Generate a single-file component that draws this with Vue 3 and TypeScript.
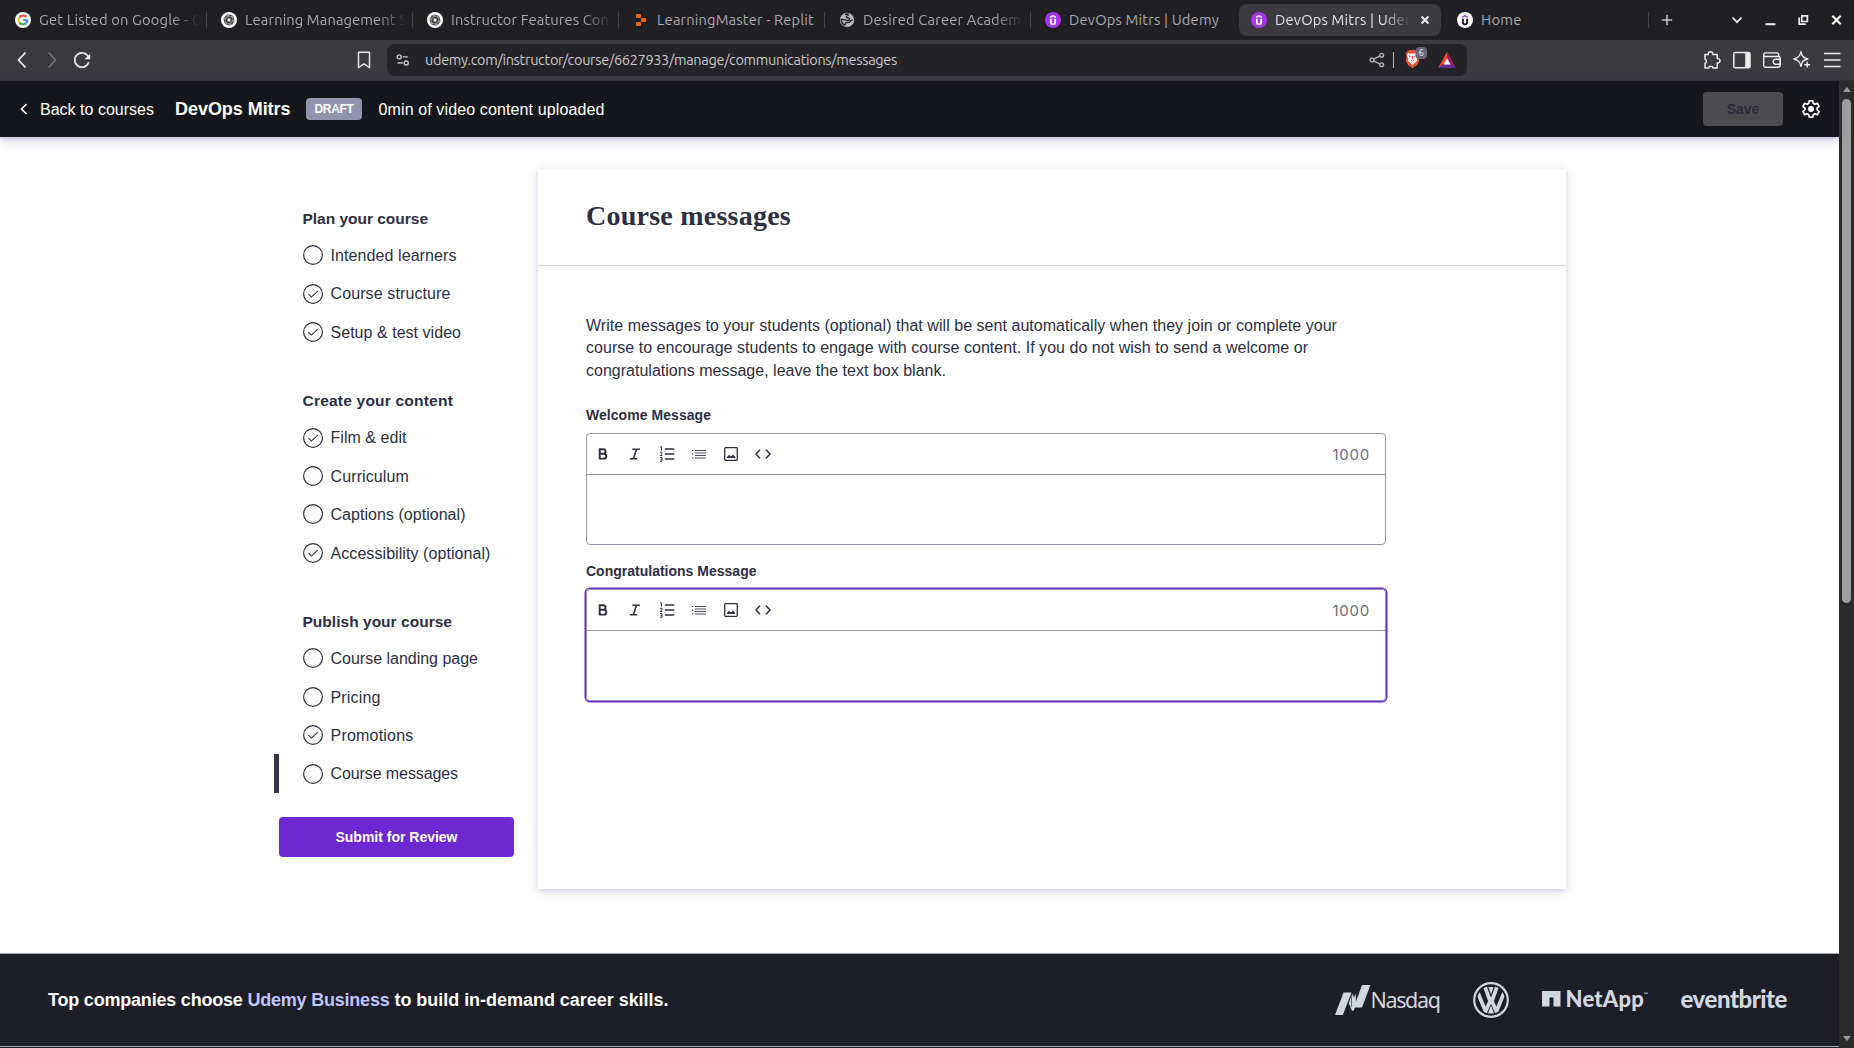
<script setup lang="ts">
import type { Directive } from 'vue'

interface Tab { title: string; icon: 'google' | 'gpt' | 'replit' | 'globe' | 'udemy' | 'home'; active?: boolean; divider?: boolean; fade?: boolean; width: number }
interface Step { label: string; done?: boolean; current?: boolean; width: number }
interface Section { title: string; width: number; steps: Step[] }

/* Tracks a line of text so that it spans the given width in pixels. */
const vFit: Directive<HTMLElement, number> = {
  mounted(el, { value }) {
    const natural = el.getBoundingClientRect().width
    const count = (el.textContent ?? '').length
    if (count) el.style.letterSpacing = `${((value - natural) / count).toFixed(3)}px`
  },
}

const tabs: Tab[] = [
  { title: 'Get Listed on Google - G', icon: 'google', divider: true, fade: true, width: 163 },
  { title: 'Learning Management S', icon: 'gpt', divider: true, fade: true, width: 162 },
  { title: 'Instructor Features Con', icon: 'gpt', divider: true, fade: true, width: 158 },
  { title: 'LearningMaster - Replit', icon: 'replit', divider: true, width: 157 },
  { title: 'Desired Career Academ', icon: 'globe', divider: true, fade: true, width: 158 },
  { title: 'DevOps Mitrs | Udemy', icon: 'udemy', width: 150 },
  { title: 'DevOps Mitrs | Udemy', icon: 'udemy', active: true, width: 150 },
  { title: 'Home', icon: 'home', divider: true, width: 40.5 },
]

const sections: Section[] = [
  {
    title: 'Plan your course', width: 125.5,
    steps: [
      { label: 'Intended learners', width: 126 },
      { label: 'Course structure', done: true, width: 120 },
      { label: 'Setup & test video', done: true, width: 130.5 },
    ],
  },
  {
    title: 'Create your content', width: 150.5,
    steps: [
      { label: 'Film & edit', done: true, width: 76 },
      { label: 'Curriculum', width: 78.5 },
      { label: 'Captions (optional)', width: 135 },
      { label: 'Accessibility (optional)', done: true, width: 160 },
    ],
  },
  {
    title: 'Publish your course', width: 149.5,
    steps: [
      { label: 'Course landing page', width: 147.5 },
      { label: 'Pricing', width: 50 },
      { label: 'Promotions', done: true, width: 83 },
      { label: 'Course messages', current: true, width: 127.5 },
    ],
  },
]

const intro = [
  { text: 'Write messages to your students (optional) that will be sent automatically when they join or complete your', width: 751 },
  { text: 'course to encourage students to engage with course content. If you do not wish to send a welcome or', width: 722 },
  { text: 'congratulations message, leave the text box blank.', width: 360 },
]

const editors = [
  { label: 'Welcome Message', width: 125, focused: false },
  { label: 'Congratulations Message', width: 170.5, focused: true },
]
</script>

<template>
  <div class="screen">
    <div class="tabstrip">
      <div v-for="(tab, i) in tabs" :key="i" class="tab" :class="{ divided: tab.divider, active: tab.active, fade: tab.fade }">
        <svg v-if="tab.icon === 'google'" class="fav" viewBox="0 0 16 16">
          <circle cx="8" cy="8" r="8" fill="#fff" />
          <g fill="none" stroke-width="2">
            <path d="M11.4 5A4.4 4.4 0 0 0 4.3 5.7" stroke="#ea4335" />
            <path d="M4.3 5.7A4.4 4.4 0 0 0 4.3 10.3" stroke="#fbbc05" />
            <path d="M4.3 10.3A4.4 4.4 0 0 0 10.9 11.3" stroke="#34a853" />
            <path d="M10.9 11.3A4.4 4.4 0 0 0 12.4 8.2H8.1" stroke="#4285f4" />
          </g>
        </svg>
        <svg v-else-if="tab.icon === 'gpt'" class="fav" viewBox="0 0 16 16">
          <circle cx="8" cy="8" r="8" fill="#fff" />
          <g fill="none" stroke="#222" stroke-width=".8">
            <rect v-for="r in 3" :key="r" x="2.900" y="5.400" width="10.200" height="5.200" rx="2.500" :transform="`rotate(${r * 60 + 15} 8 8)`" />
            <path d="M8 5.8l1.900 1.100v2.200L8 10.200 6.100 9.100V6.900z" />
          </g>
        </svg>
        <svg v-else-if="tab.icon === 'replit'" class="fav" viewBox="0 0 16 16" fill="#f26207">
          <rect x="3" y="2" width="5" height="4" rx=".8" /><rect x="8" y="6" width="5" height="4" rx=".8" /><rect x="3" y="10" width="5" height="4" rx=".8" />
        </svg>
        <svg v-else-if="tab.icon === 'globe'" class="fav" viewBox="0 0 16 16">
          <circle cx="8" cy="8" r="7.200" fill="#b4b7bb" />
          <path d="M6 2.500L8.500 2c1.300.1.700 1.600-.3 2C7 4.500 7 5.600 8.200 5.700c1.600.2 2.500.3 2.300 1.600-.2 1.200-1.600 1.200-2.800 1C6 8 4.300 7 2.300 7.500c-.1 2.300.9 4.300 2.700 5.400 1 .5 1.500-.3 1.300-1.200-.2-1 .5-1.200 1.400-1.200 1.500 0 3.300.2 3.600-1.200.2-1 1.400-1.300 2.400-1.100" fill="none" stroke="#232227" stroke-width="1.300" />
        </svg>
        <svg v-else class="fav" viewBox="0 0 16 16">
          <circle cx="8" cy="8" r="8" :fill="tab.icon === 'home' ? '#fff' : '#a435f0'" />
          <path d="M5.300 5.300L8 3.700l2.700 1.600" fill="none" :stroke="tab.icon === 'home' ? '#a435f0' : '#fff'" stroke-width="1.500" />
          <path d="M5.900 6.800v3.400a2.100 2.100 0 0 0 4.200 0V6.800" fill="none" :stroke="tab.icon === 'home' ? '#111' : '#fff'" stroke-width="1.800" />
        </svg>
        <div class="tabtext"><span v-fit="tab.width">{{ tab.title }}</span></div>
        <svg v-if="tab.active" class="tabclose" viewBox="0 0 10 10"><path d="M1.500 1.500l7 7M8.500 1.500l-7 7" stroke="#eee" stroke-width="1.900" /></svg>
      </div>
      <svg class="plus" viewBox="0 0 12 12"><path d="M6 .8v10.400M.8 6h10.400" stroke="#c6c5c8" stroke-width="1.500" /></svg>
      <div class="winbtns">
        <svg viewBox="0 0 12 12"><path d="M1.500 3.500L6 8.200l4.500-4.700" fill="none" stroke="#eee" stroke-width="1.800" /></svg>
        <svg viewBox="0 0 12 12"><path d="M1.500 10.200h10" stroke="#eee" stroke-width="2" /></svg>
        <svg viewBox="0 0 12 12" fill="none" stroke="#eee" stroke-width="1.700"><path d="M4.800 1.900h5.600v5.600H4.800z" /><path d="M2.200 3.500v6.700h6.600" /></svg>
        <svg viewBox="0 0 12 12"><path d="M2.300 1.800l8.400 8.400M10.700 1.800l-8.400 8.400" stroke="#f4f4f4" stroke-width="2.200" /></svg>
      </div>
    </div>

    <div class="toolbar">
      <svg class="nav back" viewBox="0 0 18 18"><path d="M12.500 1.500L5.500 9l7 7.500" fill="none" stroke="#eee" stroke-width="1.700" /></svg>
      <svg class="nav fwd" viewBox="0 0 18 18"><path d="M5.500 1.500L12.500 9l-7 7.500" fill="none" stroke="#77767b" stroke-width="1.600" /></svg>
      <svg class="nav reload" viewBox="0 0 18 18"><path d="M15.800 11.300A7.200 7.200 0 1 1 15.400 5.800" fill="none" stroke="#eee" stroke-width="1.700" /><path d="M17.200 2.700v5.500H11.500z" fill="#eee" /></svg>
      <svg class="bookmark" viewBox="0 0 14 18"><path d="M1.500 1.200h11v15.300L7 12.800l-5.500 3.700z" fill="none" stroke="#e6e6e8" stroke-width="1.500" stroke-linejoin="round" /></svg>
      <div class="urlbar">
        <svg class="site" viewBox="0 0 14 12" fill="none" stroke="#c8c8cc" stroke-width="1.400"><circle cx="3.200" cy="2.900" r="2" /><path d="M6.600 2.900h5.200M1.600 9h5" /><circle cx="10.200" cy="9" r="2" /></svg>
        <span class="url" v-fit="472">udemy.com/instructor/course/6627933/manage/communications/messages</span>
        <svg class="share" viewBox="0 0 16 16" fill="none" stroke="#b9b9bd" stroke-width="1.300"><circle cx="3" cy="8" r="1.900" /><circle cx="12.700" cy="3.200" r="1.900" /><circle cx="12.700" cy="12.800" r="1.900" /><path d="M4.700 7.200L11 4M4.700 8.800L11 12" /></svg>
        <i class="sep"></i>
        <svg class="brave" viewBox="0 0 24 22">
          <path d="M3.500 4L6 3h5l2.600 1 1.800 2.300-.7 2 .4 5.400-2.100 4.400L8.500 21l-4.500-2.900-2.100-4.400.4-5.400-.7-2z" fill="#fb542b" />
          <path d="M4 6.300l2.200.5 2.300-.6 2.300.6 2.200-.5.900 2-1.300 3.700.5 1.700-2.600 2.400-2 2.100-2-2.100-2.600-2.400.5-1.700-1.300-3.700z" fill="#fff" />
          <path d="M4.700 8.700l2.200.8M12.300 8.700l-2.200.8M8.500 9v3.500M6.800 13.400l1.700.8 1.700-.8" stroke="#fb542b" stroke-width="1" fill="none" />
          <rect x="11.500" y="0" width="11.500" height="12" rx="4" fill="#666879" />
          <text x="17.300" y="8.800" text-anchor="middle" font-size="8" fill="#eee" font-family="Noto Sans, sans-serif">6</text>
        </svg>
        <svg class="bat" viewBox="0 0 18 16"><path d="M9 0v7L5.500 12 0 16z" fill="#ff4724" /><path d="M9 0l9 16-6-4-3-5z" fill="#9e1f63" /><path d="M0 16l5.500-4h7L18 16z" fill="#662d91" /><path d="M9 6.300l3.500 6.200h-7z" fill="#fff" /></svg>
      </div>
      <div class="ext">
        <svg viewBox="0 0 20 20"><path d="M3 4.500h3.300a2.300 2.300 0 1 1 4.500 0H15.200v4a2.300 2.300 0 1 1 0 4.500v5H11a2.200 2.200 0 0 0-4.300 0H3v-4.600a2.400 2.400 0 0 0 0-4.400z" fill="none" stroke="#eee" stroke-width="1.500" stroke-linejoin="round" /></svg>
        <svg viewBox="0 0 20 20"><rect x="1.800" y="2.500" width="16.200" height="15.200" rx="1.500" fill="none" stroke="#eee" stroke-width="1.500" /><path d="M13.200 2.500h4.800v15.200h-4.800z" fill="#eee" /></svg>
        <svg viewBox="0 0 20 20" fill="none" stroke="#eee" stroke-width="1.400"><path d="M16.600 6.500V4.500a1.600 1.600 0 0 0-1.600-1.600H3.500a1.800 1.800 0 0 0 0 3.600h13a1.700 1.700 0 0 1 1.700 1.700v7.300a1.700 1.700 0 0 1-1.700 1.700H3.500a1.800 1.800 0 0 1-1.800-1.700V4.700" /><path d="M18.200 9.300h-4.500a2.500 2.500 0 0 0 0 5h4.500z" /></svg>
        <svg viewBox="0 0 20 20" fill="none" stroke="#eee" stroke-width="1.400" stroke-linejoin="round"><path d="M9 1.700c.8 4.300 2 6 6.800 7.300-2.900.8-4.500 1.500-5.400 3-.6 1-.9 2.200-1.400 4.300C8.100 12 6.600 10.200 1.800 9 6.600 7.800 8.100 6 9 1.700z" /><path d="M15.200 11.800v5.800M12.300 14.700h5.800" /></svg>
        <svg viewBox="0 0 20 20"><path d="M2 3.600h16.500M2 10h16.500M2 16.400h16.500" stroke="#eee" stroke-width="1.500" /></svg>
      </div>
    </div>

    <div class="viewport">
      <div class="page">
        <header class="top">
          <svg class="chev" viewBox="0 0 8 12"><path d="M6.500 1L1.500 6l5 5" fill="none" stroke="#fff" stroke-width="1.600" /></svg>
          <span class="backlink"><span v-fit="114">Back to courses</span></span>
          <span class="course"><span v-fit="115.500">DevOps Mitrs</span></span>
          <span class="draft"><span v-fit="39">DRAFT</span></span>
          <span class="mins"><span v-fit="226">0min of video content uploaded</span></span>
          <button class="save"><span v-fit="32.500">Save</span></button>
          <svg class="gear" viewBox="0 0 20 20"><path d="M8.200 1.300h3.600l.5 2.500 1.500.9 2.500-.9 1.800 3.100-2 1.700v1.800l2 1.700-1.800 3.100-2.500-.9-1.500.9-.5 2.500H8.200l-.5-2.500-1.500-.9-2.500.9-1.800-3.100 2-1.700V8.600l-2-1.700 1.800-3.100 2.500.9 1.500-.9z" transform="translate(0 .5)" fill="none" stroke="#fff" stroke-width="1.700" stroke-linejoin="round" /><circle cx="10" cy="10" r="3" fill="#fff" /></svg>
        </header>

        <main class="body">
          <nav class="side">
            <section v-for="s in sections" :key="s.title">
              <h2><span v-fit="s.width">{{ s.title }}</span></h2>
              <div v-for="step in s.steps" :key="step.label" class="step" :class="{ current: step.current }">
                <svg viewBox="0 0 20 20" fill="none" stroke="#2d2f42"><circle cx="10" cy="10" r="9.400" stroke-width="1.200" /><path v-if="step.done" d="M5.400 10.100l3 3 6.400-6" stroke-width="1.100" /></svg>
                <span v-fit="step.width">{{ step.label }}</span>
              </div>
            </section>
            <button class="submit"><span v-fit="122">Submit for Review</span></button>
          </nav>

          <div class="card">
            <div class="cardhead"><h1><span v-fit="205">Course messages</span></h1></div>
            <div class="cardbody">
              <p><span v-for="l in intro" :key="l.text" class="line"><span v-fit="l.width">{{ l.text }}</span></span></p>
              <div v-for="e in editors" :key="e.label" class="field">
                <label><span v-fit="e.width">{{ e.label }}</span></label>
                <div class="editor" :class="{ focused: e.focused }">
                  <div class="tools">
                    <svg viewBox="0 0 16 16" fill="none" stroke="#2d2f42" stroke-width="1.900"><path d="M4.700 3.300h3.600a2.100 2.100 0 0 1 0 4.500H4.700zM4.700 7.800h4.200a2.400 2.400 0 0 1 0 4.800H4.700z" /></svg>
                    <svg viewBox="0 0 16 16" fill="none" stroke="#2d2f42" stroke-width="1.500"><path d="M5.400 3.200h7.500M2.800 12.700h7.500M9.500 3.200L6.400 12.700" /></svg>
                    <svg viewBox="0 0 16 16" fill="none" stroke="#2d2f42"><path d="M5.800 3h9.500M5.800 8h9.500M5.800 13h9.500" stroke-width="1.300" /><path d="M1 .8h1.500v3.700M1 6.300h2v1.500L1.200 9.500H3.300M1 11.500h2v3.700H1M1.600 13.300H3" stroke-width="1" /></svg>
                    <svg viewBox="0 0 16 16" fill="none" stroke="#4c4e60"><path d="M4 4.500h11M4 7h11M4 9.500h11M4 12h11" stroke-width="1" /><path d="M1 4.500h1.300M1 8.200h1.300M1 11.900h1.300" stroke-width="1.200" /></svg>
                    <svg viewBox="0 0 16 16"><rect x="1.700" y="1.700" width="12.600" height="12.600" rx=".8" fill="none" stroke="#2d2f42" stroke-width="1.300" /><path d="M4 12V11l2-2.200 1.800 1.700L10.300 8.500 12.200 11v1z" fill="#2d2f42" /></svg>
                    <svg viewBox="0 0 16 16" fill="none" stroke="#2d2f42" stroke-width="1.500"><path d="M5 3.700L1 8l4 4.300M11 3.700L15 8l-4 4.300" /></svg>
                    <span class="count"><span v-fit="37.500">1000</span></span>
                  </div>
                  <div class="area"></div>
                </div>
              </div>
            </div>
          </div>
        </main>

        <footer class="foot">
          <div class="claim"><span v-fit="199.500">Top companies choose&nbsp;</span><b v-fit="142">Udemy Business</b><span v-fit="279">&nbsp;to build in-demand career skills.</span></div>
          <div class="logos">
            <div class="nasdaq">
              <svg viewBox="0 0 36 30" fill="#d1d7e0"><path d="M8.500 7.500h8l-8.700 22.500H0z" /><path d="M17 8.200l2 4.200 1.800-4.200.2 12-2.600 5.800-1.600-.5-3-7z" /><path d="M27 0h8.400L27 22.500h-8.200z" /><path d="M16.500 8v14" stroke="#1d1e27" stroke-width=".6" /></svg>
              <span v-fit="69">Nasdaq</span>
            </div>
            <svg class="vw" viewBox="0 0 36 36" fill="none" stroke="#d1d7e0">
              <circle cx="18" cy="18" r="16.800" stroke-width="2.200" />
              <clipPath id="ring"><circle cx="18" cy="18" r="13.900" /></clipPath>
              <g clip-path="url(#ring)" stroke-width="3.800"><path d="M10.300 0L16.300 16.800h3.400L25.700 0" /><path d="M2.500 5L12.600 29.500 17 19.300h2L23.400 29.500 33.500 5" /></g>
              <path d="M15.400 5h5.200L18 12.500z" fill="#d1d7e0" stroke="none" />
              <path d="M15 31.500L18 23.500l3 8z" fill="#d1d7e0" stroke="none" />
            </svg>
            <div class="netapp"><svg viewBox="0 0 19 16" fill="#d1d7e0"><path d="M0 0h18.500v15.500h-7v-9h-4v9H0z" /></svg><span v-fit="78.500">NetApp</span><sup>™</sup></div>
            <div class="eventbrite"><span v-fit="106.500">eventbrite</span></div>
          </div>
        </footer>
        <div class="next"></div>
      </div>

      <div class="scroll">
        <i class="up"></i>
        <div class="thumb"></div>
        <i class="down"></i>
      </div>
    </div>
  </div>
</template>

<style>
html, body { margin: 0; overflow: hidden; background: #fff; }
</style>

<style scoped>
* { box-sizing: border-box; }
.screen { width: 1854px; height: 1048px; display: flex; flex-direction: column; overflow: hidden; font-family: "Liberation Sans", Arial, sans-serif; color: #2d2f42; }
span { white-space: nowrap; }
svg { display: block; flex: none; }
button { border: 0; padding: 0; font: inherit; }
h1, h2, p { margin: 0; }

.tabstrip { height: 40px; flex: none; display: flex; align-items: center; padding-left: 1px; background: #201f24; font: 14.700px/32px Ubuntu, "Noto Sans", sans-serif; color: #a9a8ab; }
.tab { width: 206px; height: 32px; flex: none; display: flex; align-items: center; padding-left: 14px; background: linear-gradient(#434247, #434247) no-repeat right center / 0 16px; }
.tab.divided { background-size: 1px 16px; }
.tab.active { width: 202px; margin: 0 2px; padding-left: 12px; border-radius: 8px; background: #3b3a3f; color: #e4e4e6; }
.fav { width: 16px; height: 16px; margin-right: 8px; }
.tabtext { width: 164px; }
.fade .tabtext { mask-image: linear-gradient(to right, #000 132px, transparent 161px); }
.tabtext span { display: inline-block; }
.active .tabtext { width: 134px; overflow: hidden; mask-image: linear-gradient(to right, #000 108px, transparent 136px); }
.tabclose { width: 10px; height: 10px; margin-left: 11px; }
.plus { width: 12px; height: 12px; margin-left: 12px; }
.winbtns { display: flex; gap: 21px; margin-left: 58px; }
.winbtns svg { width: 12px; height: 12px; }

.toolbar { height: 41px; flex: none; display: flex; align-items: center; background: #3b3a3f; border-bottom: 1px solid #2f2e33; }
.nav { width: 18px; height: 18px; }
.back { margin-left: 13px; }
.fwd { margin-left: 12px; }
.reload { margin-left: 12px; }
.bookmark { width: 14px; height: 18px; margin-left: 266px; }
.urlbar { width: 1080px; height: 32px; margin-left: 16px; border-radius: 8px; background: #242328; display: flex; align-items: center; padding-left: 9px; font: 14.500px/32px Ubuntu, "Noto Sans", sans-serif; color: #c8c7cb; }
.site { width: 14px; height: 12px; margin-right: 15px; }
.url { display: inline-block; }
.share { width: 16px; height: 16px; margin-left: auto; }
.sep { width: 1px; height: 16px; background: #b5b5b8; margin-left: 8px; }
.brave { width: 24px; height: 22px; margin: -2px 0 2px 10px; }
.bat { width: 18px; height: 16px; margin: 0 11px 0 10px; }
.ext { display: flex; gap: 10px; margin-left: 234.500px; }
.ext svg { width: 20px; height: 20px; }

.viewport { flex: 1; min-height: 0; display: flex; }
.page { width: 1839px; display: flex; flex-direction: column; background: #fff; }
.top { height: 56px; flex: none; display: flex; align-items: center; padding-bottom: 1px; background: #16171d; color: #fff; position: relative; box-shadow: 0 2px 4px rgba(80, 70, 170, .22), 0 4px 12px rgba(80, 70, 170, .2); font-size: 16px; }
.top span span, h1 span, h2 span, .step span, .line span, label span, .submit span, .save span, .count span { display: inline-block; }
.chev { width: 8px; height: 12px; margin-left: 20px; margin-top: 1px; }
.backlink { margin-left: 12px; width: 134px; padding-top: 2px; }
.course { font-size: 18px; font-weight: 700; width: 132px; margin-left: 1px; padding-top: 1px; }
.draft { width: 56px; height: 22px; border-radius: 4px; background: #9194ac; font: 700 12px/22px "Liberation Sans", Arial, sans-serif; text-align: center; margin-left: -1px; margin-top: 1px; }
.mins { margin-left: 16.500px; padding-top: 2px; }
.save { width: 80px; height: 34px; border-radius: 4px; margin-left: auto; background: #4b4b50; color: #2b2c38; font-size: 14px; font-weight: 700; }
.gear { width: 20px; height: 20px; margin: 0 18px; }

.body { height: 816px; flex: none; display: flex; padding: 32px 0 0 274px; }
.side { width: 264px; padding-top: 39.800px; }
section { height: 182.400px; }
section:nth-of-type(2) { height: 220.800px; }
section:nth-of-type(3) { height: 204.800px; }
h2 { font-size: 15.500px; line-height: 19.200px; font-weight: 700; margin: 0 0 8px 28.500px; }
.step { height: 38.400px; display: flex; align-items: center; padding-left: 24px; border-left: 5px solid transparent; font-size: 16px; line-height: 22.400px; }
.step.current { border-left-color: #33354a; }
.step svg { width: 20px; height: 20px; margin-right: 7.500px; }
.step span { padding-top: 2px; }
.submit { display: block; width: 235px; height: 40px; margin-left: 5px; border-radius: 4px; background: #6d28d2; color: #fff; font-size: 14px; font-weight: 700; }

.card { width: 1028px; height: 720px; background: #fff; box-shadow: 0 2px 4px rgba(6, 17, 118, .08), 0 4px 12px rgba(6, 17, 118, .08), 0 0 8px rgba(80, 70, 170, .1); }
.cardhead { height: 97px; padding: 31px 48px 0; border-bottom: 1px solid #d1d2e0; }
h1 { font: 700 28px/32px "Liberation Serif", "Times New Roman", serif; }
.cardbody { padding: 49px 48px 0; }
p { font-size: 16px; line-height: 22.400px; margin-bottom: 25px; }
.line { display: block; }
.field { height: 156px; }
label { display: block; height: 26px; font-size: 14px; font-weight: 700; line-height: 17px; }
.editor { width: 800px; height: 112px; border: 1px solid #9194ac; border-radius: 4px; }
.field + .field .editor { margin-top: 0; }
.editor.focused { box-shadow: 0 0 0 1.500px #6d28d2; }
.tools { height: 41px; display: flex; align-items: center; padding-left: 8px; border-bottom: 1px solid #9194ac; }
.tools svg { width: 16px; height: 16px; margin-right: 16px; }
.count { margin-left: auto; margin-right: 15px; font: 15px/20px Inter, sans-serif; color: #6a6d85; padding-top: 1px; }

.foot { height: 93px; flex: none; display: flex; align-items: center; border-top: 1px solid #a9a9bd; background: #1d1e27; padding: 0 52px 0 48px; }
.claim { display: flex; font-size: 18px; font-weight: 700; color: #fff; white-space: pre; }
.claim b { color: #c0c4fc; }
.logos { margin-left: auto; display: flex; align-items: center; color: #d1d7e0; }
.nasdaq { display: flex; align-items: center; font: 21.500px/28px "Noto Sans", sans-serif; width: 138px; }
.nasdaq svg { width: 36px; height: 30px; }
.vw { width: 36px; height: 36px; }
.netapp { display: flex; align-items: center; width: 106px; margin-left: 33px; font: 900 22px/28px Lato, sans-serif; margin-top: -2px; }
.netapp svg { width: 19px; height: 16px; margin: 0 5px 1px 0; }
.netapp sup { font-size: 5px; line-height: 10px; margin-top: -10px; }
.eventbrite { width: 106.500px; margin: -3px 0 0 33px; font: 900 24px/28px Lato, sans-serif; }
.eventbrite span, .nasdaq span, .netapp span { display: inline-block; }
.next { flex: 1; background: #1d1e27; border-top: 1px solid #a9a9bd; }

.scroll { width: 15px; flex: none; background: #2b2b2b; display: flex; flex-direction: column; align-items: center; }
.up { border: 4px solid transparent; border-top: 0; border-bottom: 5px solid #9f9f9f; margin: 6px 0 7px; }
.thumb { width: 9px; height: 504px; border-radius: 5px; background: #9f9f9f; }
.down { border: 4px solid transparent; border-bottom: 0; border-top: 5px solid #9f9f9f; margin: auto 0 7px; }
</style>
